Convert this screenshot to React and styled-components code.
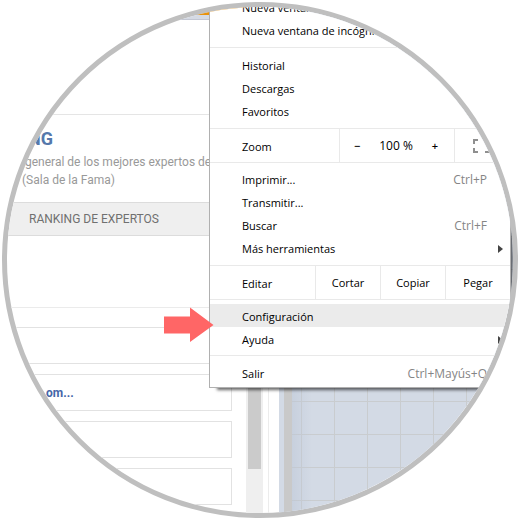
import React from 'react';
import styled, { createGlobalStyle } from 'styled-components';

const cards = ['', 'om...', '', ''];

const App = () => {
  return (
    <>
      <GlobalStyle />
      <Stage>
        <Lens>
          <Page>
            <Main>
              <TopStrip />
              <Banner />
              <Intro>
                <Title>NG</Title>
                <Text>{' general de los mejores expertos de'}</Text>
                <Text>(Sala de la Fama)</Text>
              </Intro>
              <Band>RANKING DE EXPERTOS</Band>
              <Blank />
              <CardList>
                {cards.map((name, index) => (
                  <Card key={index}>{name && <CardLink href="#">{name}</CardLink>}</Card>
                ))}
              </CardList>
            </Main>
            <ScrollTrack>
              <ScrollThumb />
            </ScrollTrack>
            <Gutter />
            <Tiles />
          </Page>

          <Menu>
            <Section $top={4} $bottom={6}>
              <Item>Nueva ventana</Item>
              <Item>Nueva ventana de incógnito</Item>
            </Section>
            <Section $top={5} $bottom={6}>
              <Item>Historial</Item>
              <Item>Descargas</Item>
              <Item>Favoritos</Item>
            </Section>
            <Row>
              <RowLabel>Zoom</RowLabel>
              <ZoomCell>
                <ZoomButton aria-label="Alejar">−</ZoomButton>
                <ZoomValue>100 %</ZoomValue>
                <ZoomButton aria-label="Acercar">+</ZoomButton>
              </ZoomCell>
              <FullscreenButton aria-label="Pantalla completa">
                <svg width="17" height="14" viewBox="0 0 17 14" fill="none" stroke="#8f8f8f" strokeWidth="2">
                  <path d="M1 5V1h4M12 1h4v4M16 9v4h-4M5 13H1V9" />
                </svg>
              </FullscreenButton>
            </Row>
            <Section $top={4} $bottom={6}>
              <Item>
                Imprimir... <Shortcut>Ctrl+P</Shortcut>
              </Item>
              <Item>Transmitir...</Item>
              <Item>
                Buscar <Shortcut>Ctrl+F</Shortcut>
              </Item>
              <Item>
                Más herramientas <Caret />
              </Item>
            </Section>
            <Row>
              <RowLabel>Editar</RowLabel>
              <EditButton>Cortar</EditButton>
              <EditButton>Copiar</EditButton>
              <EditButton>Pegar</EditButton>
            </Row>
            <Section $top={4} $bottom={5}>
              <Item $active>Configuración</Item>
              <Item>
                Ayuda <Caret />
              </Item>
            </Section>
            <Section $top={5} $bottom={3}>
              <Item>
                Salir <Shortcut>Ctrl+Mayús+Q</Shortcut>
              </Item>
            </Section>
          </Menu>

          <Pointer width="50" height="36" viewBox="0 0 50 36">
            <path d="M0 9.5h26V.5L49.5 18 26 35v-8.500H0z" fill="#ff6666" />
          </Pointer>
        </Lens>
      </Stage>
    </>
  );
};

export default App;

// Styled Components
const GlobalStyle = createGlobalStyle`
  * {
    box-sizing: border-box;
  }
  body {
    margin: 0;
    background: #fff;
    font-family: Roboto, sans-serif;
    font-size: 12px;
  }
`;

const Stage = styled.main`
  padding: 2px;
`;

const Lens = styled.div`
  position: relative;
  width: 100%;
  aspect-ratio: 1;
  border: 5px solid #bfbfbf;
  border-radius: 50%;
  overflow: hidden;
`;

const Page = styled.div`
  display: grid;
  grid-template-columns: 239px 17px 21px 1fr;
  height: 100%;
`;

const Main = styled.div`
  overflow: hidden;
`;

const TopStrip = styled.div`
  height: 13px;
  border-top: 8px solid #e8920c;
  border-bottom: 1px solid #c3c7d3;
  background: #d5dae4;
`;

const Banner = styled.div`
  height: 95px;
  border-bottom: 1px solid #e5e5e5;
`;

const Intro = styled.div`
  height: 87px;
  padding: 10px 0 0 15px;
`;

const Title = styled.h1`
  margin: 0;
  padding-left: 6px;
  font-family: Roboto, sans-serif;
  font-size: 18px;
  line-height: 28px;
  color: #5578ab;
`;

const Text = styled.p`
  margin: 0;
  line-height: 18px;
  color: #999;
  white-space: pre;
`;

const Band = styled.h2`
  height: 34px;
  margin: 0;
  padding-left: 22px;
  border: solid #dcdcdc;
  border-width: 1px 0;
  background: #efefef;
  font-size: 12px;
  font-weight: 400;
  line-height: 32px;
  color: #707070;
`;

const Blank = styled.div`
  height: 72px;
  border-bottom: 1px solid #ebebeb;
`;

const CardList = styled.div`
  display: grid;
  gap: 10px;
  padding: 19px 14px 0 0;
`;

const Card = styled.div`
  height: 37px;
  padding-left: 38px;
  border: 1px solid #e2e2e2;
  line-height: 36px;
`;

const CardLink = styled.a`
  color: #4565a8;
  font-weight: 700;
  text-decoration: none;
`;

const ScrollTrack = styled.div`
  padding: 0 2px;
  background: #efefef;
`;

const ScrollThumb = styled.div`
  height: 462px;
  background: #cbcbcb;
`;

const Gutter = styled.div`
  margin-left: 5px;
  border-left: 1px solid #ececec;
  border-right: 5px solid #d3dae5;
`;

const Tiles = styled.div`
  border-left: 8px solid #c9c9c9;
  background-color: #d3dae5;
  background-image:
    linear-gradient(90deg, #bcc6d680, #d3dae500 20px),
    linear-gradient(90deg, #c9cccf 1px, transparent 1px),
    linear-gradient(#c9cccf 1px, transparent 1px);
  background-size: 100% 100%, 33px 33px, 33px 33px;
  background-position: 0 0, 9px 0, 0 31px;
`;

const Menu = styled.div`
  position: absolute;
  top: -17px;
  left: 202px;
  right: 2px;
  border: 1px solid #b0b0b0;
  background: #fff;
  box-shadow: 5px 5px 3px -3px rgba(0, 0, 0, 0.6);
  color: #000;
  font-family: 'Open Sans', 'Noto Sans', sans-serif;
  font-size: 11px;
`;

const Section = styled.div`
  padding: ${props => props.$top}px 0 ${props => props.$bottom}px;

  & + & {
    border-top: 1px solid #e9e9e9;
  }
`;

const MenuButton = styled.button`
  margin: 0;
  padding: 0;
  border: 0;
  background: none;
  color: inherit;
  font: inherit;
`;

const Item = styled(MenuButton)`
  display: flex;
  align-items: center;
  justify-content: space-between;
  width: 100%;
  height: 23px;
  padding: 2px 7px 0 32px;
  background: ${props => (props.$active ? '#ebebeb' : 'none')};
  text-align: left;
  white-space: nowrap;
`;

const Shortcut = styled.span`
  margin-right: 16px;
  color: #858585;
  font-size: 12px;
`;

const Caret = styled.i`
  border: solid transparent;
  border-width: 4px 0 4px 5px;
  border-left-color: #444;
`;

const Row = styled.div`
  display: flex;
  height: 35px;
  border: solid #e9e9e9;
  border-width: 1px 0;
`;

const RowLabel = styled.span`
  flex: 1;
  padding-left: 32px;
  line-height: 36px;
`;

const ZoomCell = styled.div`
  display: flex;
  align-items: center;
  justify-content: space-between;
  width: 115px;
  padding: 0 16px 0 14px;
  border-left: 1px solid #e9e9e9;
`;

const ZoomValue = styled.span`
  font-size: 12px;
`;

const ZoomButton = styled(MenuButton)`
  font-weight: 600;
`;

const FullscreenButton = styled(MenuButton)`
  display: flex;
  align-items: center;
  width: 56px;
  padding-left: 18px;
  border-left: 1px solid #e9e9e9;
`;

const EditButton = styled(MenuButton)`
  width: 65px;
  border-left: 1px solid #e9e9e9;
`;

const Pointer = styled.svg`
  position: absolute;
  top: 300px;
  left: 157px;
`;
